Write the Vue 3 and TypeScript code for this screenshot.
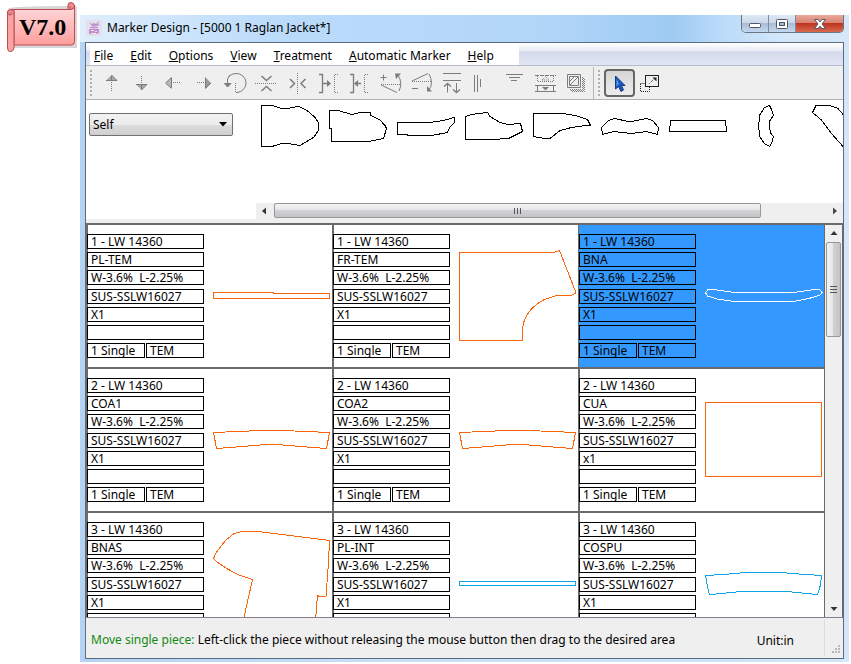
<script setup lang="ts">
import { ref } from 'vue'

interface Piece {
  order: string
  code: string
  shrink: string
  fabric: string
  qty: string
  color: string
  path: string
  grading: string[]
}

const menus: string[] = ['File', 'Edit', 'Options', 'View', 'Treatment', 'Automatic Marker', 'Help']

const tools: string[] = [
  'Move up', 'Move down', 'Move left', 'Move right', 'Rotate', 'Flip vertical', 'Flip horizontal',
  'Push right', 'Push left', 'Tilt plus', 'Tilt minus', 'Swap rows', 'Align left', 'Align top',
  'Split', 'Copy piece',
]

const outlines: string[] = [
  'M1.5 1.5H12L21.5 4.5H27.5L32 3.5L39 2.5L48.5 7.5L55 13.5L58.5 18.5V26.5L53.5 33.5L40 41.5L27.5 39.5H21.5L12 42.5H1.5Z',
  'M1.5 6.5L10 6.5L24 10.5L32 8.5H42.5L43 11.5L52 16L57 21.5L58.5 24.5L55.5 34.5L40.5 37.5H3.5V24.5H1.5Z',
  'M1.5 18.5H34L47.5 16.5L58 13.5L58.5 18.5L53.5 23.5L51.5 28.5L35.5 31.5H12.5L10.5 30.5H1.5Z',
  'M1.5 12.5L7.5 10.5L23.5 8.5L26 12.5L36 18.5L44.5 20.5L56.5 19.5L58.5 27.5L44.5 34.5L27 35.5H1.5Z',
  'M1.5 9.5H31.5L43 11.5L55.5 15.5L58.5 21.5H53L39.5 23.5L28 26.5L18 34.5H13L1.5 32.5Z',
  'M1.5 23.5L8.5 16.5L14.5 14.5L28.5 17.5H32L46.5 14.5L52.5 16.5L58.5 23.5L57.5 30.5L46.5 27.5L31 29.5L13.5 27.5L2.5 30.5Z',
  'M2.5 16.5H57.5L58.5 27.5H1.5Z',
  'M33.5 1.5L35.5 5.5L37.5 11.5L34 16.5L33.5 23.5L34.5 29L37.5 32.5L35.5 39.5L33.5 42.5L28.5 39.5L24 33L22.5 22.5L24 10.5L28.5 3.5Z',
  'M48 16L39 10.5L34 4.5L26 1.5H12L8.5 8.5L17.5 16L27.5 29.5L39 42.5L48 52',
]

const orange = '#fb650a'
const cyan = '#10a5e8'
const collar = 'M1.5 54.5L26 53.5L48.5 52.5H71L93.5 53.5L117.5 54.5L114.5 70.5L88.5 68.5L64.5 66.5H53.5L30.5 68.5L4.5 70.5Z'

function make(row: number, code: string, color: string, path: string, qty = 'X1'): Piece {
  return {
    order: `${row} - LW 14360`,
    code,
    shrink: 'W-3.6%  L-2.25%',
    fabric: 'SUS-SSLW16027',
    qty,
    color,
    path,
    grading: row < 3 ? ['1 Single', 'TEM'] : ['', ''],
  }
}

const pieces: Piece[] = [
  make(1, 'PL-TEM', orange, 'M1.5 58.5H61.5V59.5H117.5V64.5H1.5Z'),
  make(1, 'FR-TEM', orange, 'M1.5 18.5H96L101.5 16.5L117.5 57.5V59.5L112.5 61.5H98L85.5 66L79 70L73.5 75L69 81L66 87.5L64.5 94.5V106.5H1.5Z'),
  make(1, 'BNA', '#ffffff', 'M1.5 58.5L4 55.5H9.5L31 58.5H89L111 55.5H115.5L118 58.5L116 61L105 64.5L89 67.5H31L13 65L3.5 62Z'),
  make(2, 'COA1', orange, collar),
  make(2, 'COA2', orange, collar),
  make(2, 'CUA', orange, 'M1.5 24.5H117.5V98.5H1.5Z', 'x1'),
  make(3, 'BNAS', orange, 'M1.5 36.5L4.5 30L13.5 18.5L22 11.5L29.5 9.5H45.5L117.5 18.5L116.5 40L114 74.5H107.5L105.5 73.5L103 104H30L40.5 57.5L28 53.5L14.5 46.5L4.5 39.5Z'),
  make(3, 'PL-INT', cyan, 'M1.5 59.5H117.5V63.5H1.5Z'),
  make(3, 'COSPU', cyan, 'M1.5 53.5L19.5 52.5L41.5 50.5H76.5L101.5 52.5L117.5 53.5L116.5 63L113.5 72.5L82.5 69.5H36.5L12.5 72L5.5 72.5L3.5 65Z'),
]

const selected = ref<number>(2)
const fabric = ref<string>('Self')
</script>

<template>
  <div class="page">
    <aside class="side">
      <div class="badge">
        <svg class="scroll" width="72" height="54" viewBox="0 0 72 54" aria-hidden="true">
          <defs>
            <linearGradient id="paper" x1="0" y1="0" x2="0" y2="1">
              <stop offset="0" stop-color="#ffdcdc" />
              <stop offset="1" stop-color="#ff9c9c" />
            </linearGradient>
          </defs>
          <path d="M4 49V7Q6 5 62 5L69 6V43H8" fill="none" stroke="#8a8a8a" stroke-opacity=".35" stroke-width="4" />
          <path d="M5 6.500H64Q70 5 68.500 2V38.500Q68.500 42 65 42H8V6.500Z" fill="url(#paper)" stroke="#bd4b50" />
          <path d="M1.500 8V45Q1.500 48.500 4.500 48.500T8 45V9" fill="#f9a3a3" stroke="#bd4b50" />
          <path d="M8 12V9Q7 6.500 4.500 6.500T1.500 9.500Q2 12.500 5 12Q6.500 10.500 5 9.500" fill="#e98d90" stroke="#bd4b50" />
          <path d="M62 6V2Q62 -.5 65 -.5T68.500 3Q68 6.500 64.500 6.500Q62.500 4 65 3.500" fill="#e98d90" stroke="#bd4b50" />
        </svg>
        <span class="version">V7.0</span>
      </div>
    </aside>

    <main class="window">
      <header class="titlebar">
        <svg class="logo" width="16" height="16" viewBox="0 0 16 16" aria-hidden="true">
          <rect width="16" height="16" fill="#e4e0ea" />
          <path d="M3 2l3 2 2-1 2 1 3-3-1 3 2 1-4 1H6zM4 7q4-1 8 0v1H4zM3 9q5-1 10 0v4q-4 2-10 1z" fill="#c48fd0" />
          <path d="M5 10h3v1H5zM9 11h2v1H9zM5 13h5v1H5z" fill="#f0e2f4" />
        </svg>
        <h1>Marker Design - [5000 1 Raglan Jacket*]</h1>
        <div class="controls">
          <button type="button" class="ctl min" aria-label="Minimize">
            <svg width="13" height="6" viewBox="0 0 13 6"><rect x=".5" y=".5" width="11" height="4" rx="1" fill="#fff" stroke="#535666" /></svg>
          </button>
          <button type="button" class="ctl max" aria-label="Maximize">
            <svg width="12" height="10" viewBox="0 0 12 10"><rect x=".5" y=".5" width="11" height="9" rx="1" fill="#fff" stroke="#535666" /><rect x="3.500" y="3.500" width="5" height="3" fill="#9fb8d4" stroke="#535666" /></svg>
          </button>
          <button type="button" class="ctl close" aria-label="Close">
            <svg width="12" height="10" viewBox="0 0 12 10"><path d="M.5.5h3.500L6 2.800 8 .5h3.500L8 5l3.500 4.500H8L6 7.200 4 9.500H.5L4 5z" fill="#fff" stroke="#535666" /></svg>
          </button>
        </div>
      </header>

      <div class="client">
        <nav class="menubar">
          <div class="menus">
            <button v-for="m in menus" :key="m" type="button" class="menu"><u>{{ m[0] }}</u>{{ m.slice(1) }}</button>
          </div>
        </nav>

        <div class="toolbar">
          <span class="grip"></span>
          <button v-for="(t, i) in tools" :key="t" type="button" class="tool" :aria-label="t">
            <svg width="25" height="25" viewBox="0 0 25 25" fill="none" stroke="#7c7c7c">
              <g v-if="i === 0"><path d="M12.500 4L7 9.500H18Z" fill="#a8a8a8" stroke="none" /><path d="M12.500 4L18 9.500H7M12.500 5V9.500" /><path d="M12.500 11V20" stroke-dasharray="1 1" /></g>
              <g v-else-if="i === 1"><path d="M6 13.500H17L11.500 19Z" fill="#a8a8a8" stroke="none" /><path d="M6 13.500H17L11.500 19V14" /><path d="M11.500 5V13" stroke-dasharray="1 1" /></g>
              <g v-else-if="i === 2"><path d="M4.500 12L10.500 6.500V17.500Z" fill="#b8b8b8" stroke="none" /><path d="M10.500 6.500V17.500M4.500 12L10.500 6.500M5 12.500L10 17" /><path d="M12 11.500H20" stroke-dasharray="1 1" /></g>
              <g v-else-if="i === 3"><path d="M19 12L13.500 6.500V17.500Z" fill="#9a9a9a" stroke="none" /><path d="M13.500 6.500V17.500L19 12" /><path d="M5 11.500H13" stroke-dasharray="1 1" /></g>
              <g v-else-if="i === 4"><path d="M5.500 5.500Q9 2.500 13 2.500A9.500 9.500 0 0 1 14 21.500" /><path d="M4.500 13V8L7 4" /><path d="M1.500 12.500H8L4.500 16Z" fill="#7c7c7c" /><path d="M12.500 12V22M14 21.500H12" stroke-dasharray="1 1" /></g>
              <g v-else-if="i === 5"><path d="M1 12.500H23" stroke-dasharray="1 1" /><path d="M7.500 5L12.500 9.500L17.500 5M7.500 20L12.500 15.500L17.500 20" stroke-width="1.500" /></g>
              <g v-else-if="i === 6"><path d="M12.500 2V23" stroke-dasharray="1 1" /><path d="M5 8L9.500 12.500L5 17M20.500 8L16 12.500L20.500 17" stroke-width="1.500" /></g>
              <g v-else-if="i === 7"><path d="M3 3.500H6.500V21.500H3M7 12.500H14" stroke-width="1.300" /><path d="M11 9V16L15 12.500Z" fill="#7c7c7c" stroke="none" /><path d="M22 3.500H18.500V21.500H22" stroke-dasharray="1 1" /></g>
              <g v-else-if="i === 8"><path d="M3 3.500H6.500V21.500H3M8 12.500H14" stroke-width="1.300" /><path d="M11 9V16L7 12.500Z" fill="#7c7c7c" stroke="none" /><path d="M21 3.500H17.500V21.500H21" stroke-dasharray="1 1" /></g>
              <g v-else-if="i === 9"><path d="M2.500 6.500H8.500M5.500 3.500V9.500M3 14L19 21.500M20 4Q25 12 21 20" /><path d="M3 13.500H22" stroke-dasharray="1 1" /><path d="M17 2.500H23L18 8Z" fill="#7c7c7c" stroke="none" /></g>
              <g v-else-if="i === 10"><path d="M3 10L19 2.500M3 17.500H9M20 3Q25 12 20 19" /><path d="M3 10.500H23" stroke-dasharray="1 1" /><path d="M18 15V20.500H23Z" fill="#7c7c7c" stroke="none" /></g>
              <g v-else-if="i === 11"><path d="M3 2.500H21M3 9.500H21M7.500 12V21.500M16.500 12V21.500" /><path d="M4 15.500L7.500 12.500L11 15.500M13 18.500L16.500 21.500L20 18.500" stroke-width="1.400" /></g>
              <g v-else-if="i === 12"><path d="M3.500 4V21M6.500 4V21M9.500 8V16" /></g>
              <g v-else-if="i === 13"><path d="M4 3.500H21M7 6.500H18M9 9.500H15" /></g>
              <g v-else-if="i === 14"><path d="M2 4.500H23" stroke-dasharray="4 1" /><path d="M4.500 5V10.500H20.500V5M9 9L12.500 5.500L16 9Z" stroke-dasharray="1 1" /><path d="M2 14.500H23M4.500 15V20M20.500 15V20M2 20.500H23" /><path d="M9 16H16L12.500 19.500Z" fill="#7c7c7c" stroke="none" /></g>
              <g v-else><path d="M3.500 3.500H16.500V16.500H3.500ZM5.500 5.500H14.500V14.500H5.500ZM6 14L14 6M6 10L10 6" /><path d="M18.500 6V18.500H6M20.500 8V20.500H8M19.500 7V19.500H7" stroke-dasharray="1 1" /></g>
            </svg>
          </button>
          <span class="divider"></span>
          <span class="grip"></span>
          <button type="button" class="tool active" aria-label="Select" aria-pressed="true">
            <svg width="25" height="25" viewBox="0 0 25 25">
              <path d="M8.500 5V18L11.500 15.500L14 20.500L16.500 19L14.500 14.500H18Z" fill="#1d57b8" stroke="#123a86" />
              <path d="M9.500 8V15.500L12 12.500Z" fill="#4da6ea" />
            </svg>
          </button>
          <button type="button" class="tool" aria-label="Zoom">
            <svg width="25" height="25" viewBox="0 0 25 25" fill="none" stroke="#222">
              <rect x="7.500" y="4.500" width="13" height="11" />
              <path d="M2.500 12.500H7M2.500 13V20.500H11.500V16" stroke-dasharray="1 1" />
              <path d="M11.500 12.500L16 8" stroke-dasharray="1 1" />
              <path d="M14.500 6.500H18.500V10.500Z" fill="#222" stroke="none" />
            </svg>
          </button>
        </div>

        <section class="strip">
          <div class="picker">
            <select v-model="fabric" aria-label="Fabric">
              <option>Self</option>
              <option>Lining</option>
            </select>
            <svg class="caret" width="8" height="5" viewBox="0 0 8 5" aria-hidden="true"><path d="M0 0H8L4 4.500Z" fill="#000" /></svg>
          </div>
          <div class="gallery">
            <div class="outlines">
              <svg v-for="(o, i) in outlines" :key="i" width="60" height="44" viewBox="0 0 60 44" shape-rendering="crispEdges">
                <path :d="o" fill="none" stroke="#000" />
              </svg>
            </div>
            <div class="hscroll">
              <svg width="16" height="16" viewBox="0 0 16 16"><path d="M10 4.500V11.500L6 8Z" fill="#333" /></svg>
              <div class="htrack"><div class="hthumb"><i></i><i></i><i></i></div></div>
              <svg width="16" height="16" viewBox="0 0 16 16"><path d="M6 4.500V11.500L10 8Z" fill="#444" /></svg>
            </div>
          </div>
        </section>

        <section class="board">
          <div class="cells">
            <article
              v-for="(p, i) in pieces"
              :key="p.code"
              class="cell"
              :class="{ selected: i === selected }"
              @click="selected = i"
            >
              <div class="fields">
                <span class="field">{{ p.order }}</span>
                <span class="field">{{ p.code }}</span>
                <span class="field">{{ p.shrink }}</span>
                <span class="field lower">{{ p.fabric }}</span>
                <span class="field">{{ p.qty }}</span>
                <span class="field"></span>
                <div class="pair">
                  <span v-for="(g, n) in p.grading" :key="n" class="field">{{ g }}</span>
                </div>
              </div>
              <svg width="120" height="123" viewBox="0 0 120 123" shape-rendering="crispEdges">
                <path :d="p.path" fill="none" :stroke="p.color" />
              </svg>
            </article>
          </div>
          <div class="vscroll">
            <svg width="16" height="16" viewBox="0 0 16 16"><path d="M4.500 10H11.500L8 6Z" fill="#333" /></svg>
            <div class="vtrack"><div class="vthumb"><i></i><i></i><i></i></div></div>
            <svg width="16" height="16" viewBox="0 0 16 16"><path d="M4.500 6H11.500L8 10Z" fill="#333" /></svg>
          </div>
        </section>

        <footer class="status">
          <p class="hint"><span class="mode">Move single piece:</span> Left-click the piece without releasing the mouse button then drag to the desired area</p>
          <span class="unit">Unit:in</span>
          <div class="corner">
            <svg width="10" height="10" viewBox="0 0 10 10" aria-hidden="true"><path d="M7 0h2v2H7zM4 3h2v2H4zM7 3h2v2H7zM1 6h2v2H1zM4 6h2v2H4zM7 6h2v2H7z" fill="#b8b8b8" /></svg>
          </div>
        </footer>
      </div>
    </main>
  </div>
</template>

<style>
body {
  background: #fff;
}
</style>

<style scoped>
* {
  box-sizing: border-box;
}
svg {
  display: block;
  flex: none;
}
.page {
  display: flex;
  height: 100vh;
  padding: 15px 2px 2px 0;
  font-family: 'Noto Sans', 'Open Sans', sans-serif;
  font-size: 12px;
  color: #000;
}
.side {
  flex: none;
  width: 80px;
}
.badge {
  position: relative;
  width: 72px;
  height: 54px;
  margin: -12px 0 0 6px;
}
.scroll {
  position: absolute;
  left: 0;
  top: 0;
  overflow: visible;
}
.version {
  position: relative;
  display: block;
  padding: 10px 0 0 13px;
  font: bold 24px/28px 'Liberation Serif', serif;
}
.window {
  flex: 1;
  min-width: 0;
  display: flex;
  flex-direction: column;
  padding: 0 5px 3px;
  background: linear-gradient(90deg, #b5d3f2, #c9e0f8 40%, #d3e6fa);
}
.titlebar {
  flex: none;
  display: flex;
  height: 27px;
  margin: 0 -5px;
  padding: 0 5px;
  background: linear-gradient(90deg, #e0eefc 0, #bbdbfa 25%, #b2d6f8 60%, #9fcbf3 77%, #bcdcf9 84%, #d5e8fa 92%);
}
.logo {
  margin: 5px 5px 0 1px;
}
h1 {
  flex: 1;
  margin: 0;
  font-size: 12px;
  font-weight: 400;
  line-height: 26px;
}
.controls {
  display: flex;
  height: 18px;
  border: 1px solid #6b7684;
  border-top: 0;
  border-radius: 0 0 5px 5px;
  overflow: hidden;
}
.ctl {
  display: flex;
  align-items: center;
  justify-content: center;
  width: 27px;
  padding: 0;
  border: 0;
  border-right: 1px solid #7d8ea3;
  background: linear-gradient(#dfe9f4, #c9d9ea 45%, #a9bed6 50%, #c3d8ee);
}
.min svg {
  margin-top: 5px;
}
.close {
  width: 47px;
  border-right: 0;
  background: linear-gradient(#e9a99b, #d98473 45%, #bd3520 50%, #d9694f);
}
.client {
  flex: 1;
  min-height: 0;
  display: flex;
  flex-direction: column;
  border: 1px solid #5c6b7e;
  background: #efefef;
}
.menubar {
  flex: none;
  height: 23px;
  padding-left: 4px;
  border-bottom: 1px solid #b6bccc;
  background: linear-gradient(#fff, #e9ecf6 35%, #d4daed 40%, #e1e5f4);
}
.menus {
  display: flex;
  width: 429px;
  height: 22px;
  padding-left: 4px;
  gap: 17px;
  background: #fff;
}
.menu {
  padding: 3px 0 0;
  border: 0;
  background: none;
  font: inherit;
  color: inherit;
  white-space: nowrap;
}
.toolbar {
  flex: none;
  display: flex;
  align-items: center;
  height: 34px;
  padding-top: 1px;
  border-bottom: 1px solid #b4b4b4;
}
.grip {
  width: 2px;
  height: 26px;
  margin: 0 4px;
  background: repeating-linear-gradient(#b0b0b0 0 2px, #efefef 2px 4px);
}
.tool {
  display: flex;
  align-items: center;
  justify-content: center;
  width: 31px;
  height: 28px;
  padding: 0;
  border: 0;
  background: none;
}
.divider {
  width: 1px;
  height: 32px;
  margin-left: 1px;
  background: #b4b4b4;
}
.tool.active {
  border: 2px solid #666;
  border-radius: 4px;
  background: linear-gradient(#d6d6d6, #ececec);
}
.strip {
  flex: none;
  display: flex;
  height: 119px;
  background: #fff;
}
.picker {
  position: relative;
  flex: none;
  width: 170px;
  padding: 13px 0 0 3px;
}
select {
  display: block;
  width: 144px;
  height: 23px;
  padding: 0 3px;
  appearance: none;
  border: 1px solid #707070;
  border-radius: 2px;
  background: linear-gradient(#f2f2f2, #ebebeb 50%, #dddddd 50%, #cfcfcf);
  font: inherit;
  color: inherit;
}
.caret {
  position: absolute;
  left: 133px;
  top: 22px;
  pointer-events: none;
}
.gallery {
  flex: 1;
  min-width: 0;
  display: flex;
  flex-direction: column;
  justify-content: space-between;
}
.outlines {
  display: flex;
  gap: 8px;
  padding: 4px 0 0 4px;
  overflow: hidden;
}
.hscroll {
  display: flex;
  height: 16px;
  background: #efefef;
}
.htrack {
  flex: 1;
  padding-left: 2px;
}
.hthumb {
  display: flex;
  align-items: center;
  justify-content: center;
  gap: 2px;
  width: 88%;
  height: 15px;
  border: 1px solid #979797;
  border-radius: 2px;
  background: linear-gradient(#f3f3f3, #e6e6e6 45%, #d2d2d4 50%, #c4c4c8);
}
.hthumb i {
  width: 1px;
  height: 6px;
  background: #555;
}
.board {
  flex: 1;
  min-height: 0;
  display: flex;
  margin-top: 4px;
  border-top: 2px solid #6a6a6a;
  border-right: 1px solid #6a6a6a;
}
.cells {
  flex: 1;
  display: grid;
  grid-template-columns: repeat(3, 1fr);
  grid-auto-rows: 144px;
  border-right: 1px solid #6a6a6a;
  overflow: hidden;
  background: #fff;
}
.cell {
  display: flex;
  gap: 8px;
  padding-top: 9px;
  border-left: 2px solid #6a6a6a;
  border-bottom: 2px solid #6a6a6a;
}
.cell.selected {
  padding-left: 1px;
  border-left-width: 1px;
  background: #3399ff;
}
.fields {
  flex: none;
  display: flex;
  flex-direction: column;
  gap: 3px;
  width: 117px;
  margin-left: -1px;
}
.field {
  flex: none;
  height: 15px;
  padding-left: 3px;
  border: 1px solid #000;
  line-height: 14px;
  white-space: pre;
}
.lower {
  margin-top: 1px;
}
.pair {
  display: flex;
  gap: 1px;
}
.pair .field {
  flex: 1;
}
.vscroll {
  flex: none;
  display: flex;
  flex-direction: column;
  align-items: center;
  width: 17px;
  background: #f0f0f0;
}
.vtrack {
  flex: 1;
  padding-top: 1px;
}
.vthumb {
  display: flex;
  flex-direction: column;
  align-items: center;
  justify-content: center;
  gap: 2px;
  width: 15px;
  height: 95px;
  border: 1px solid #979797;
  border-radius: 2px;
  background: linear-gradient(90deg, #f3f3f3, #e6e6e6 45%, #d2d2d4 50%, #c4c4c8);
}
.vthumb i {
  width: 7px;
  height: 1px;
  background: #555;
}
.status {
  flex: none;
  display: flex;
  align-items: center;
  height: 41px;
  padding-left: 5px;
  border-top: 1px solid #857f92;
}
.hint {
  flex: 1;
  margin: 0;
  padding-top: 3px;
  white-space: nowrap;
}
.mode {
  color: #128a12;
}
.unit {
  padding: 4px 30px 0 0;
}
.corner {
  display: flex;
  align-items: flex-end;
  justify-content: flex-end;
  width: 19px;
  height: 36px;
  padding: 0 2px 1px 0;
  border-left: 1px solid #dcdcdc;
}
</style>
